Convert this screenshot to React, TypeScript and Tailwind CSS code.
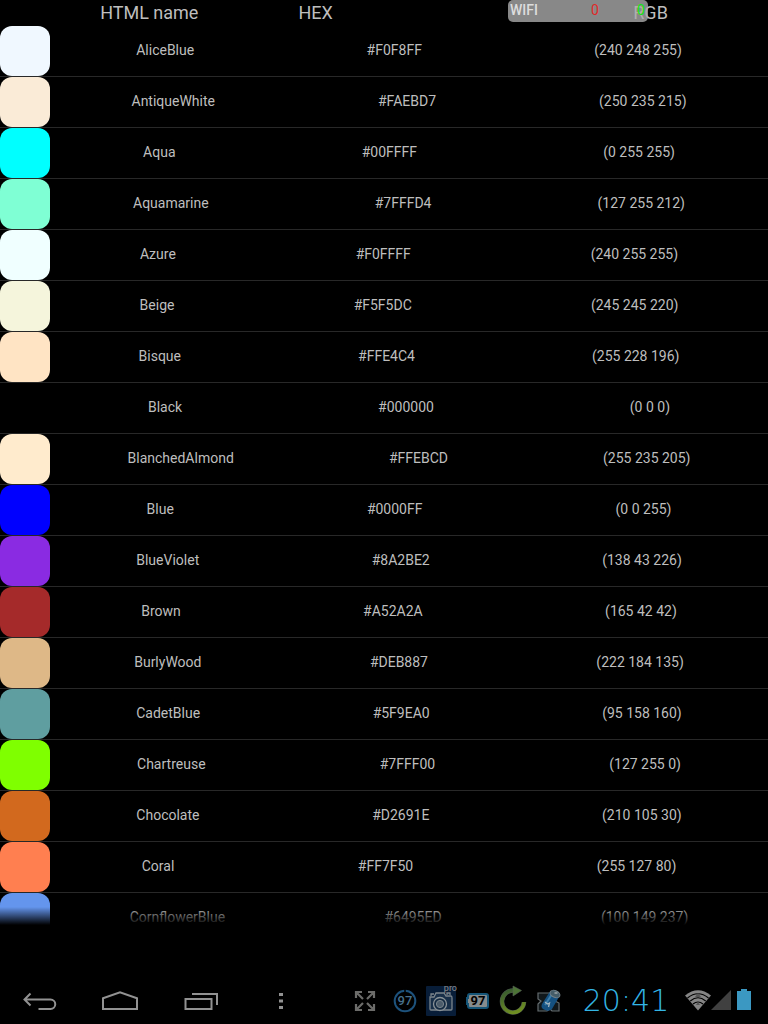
import type { ReactNode } from "react";

type ColorRow = { name: string; hex: string; rgb: string };

const COLORS: ColorRow[] = [
  { name: "AliceBlue", hex: "#F0F8FF", rgb: "(240 248 255)" },
  { name: "AntiqueWhite", hex: "#FAEBD7", rgb: "(250 235 215)" },
  { name: "Aqua", hex: "#00FFFF", rgb: "(0 255 255)" },
  { name: "Aquamarine", hex: "#7FFFD4", rgb: "(127 255 212)" },
  { name: "Azure", hex: "#F0FFFF", rgb: "(240 255 255)" },
  { name: "Beige", hex: "#F5F5DC", rgb: "(245 245 220)" },
  { name: "Bisque", hex: "#FFE4C4", rgb: "(255 228 196)" },
  { name: "Black", hex: "#000000", rgb: "(0 0 0)" },
  { name: "BlanchedAlmond", hex: "#FFEBCD", rgb: "(255 235 205)" },
  { name: "Blue", hex: "#0000FF", rgb: "(0 0 255)" },
  { name: "BlueViolet", hex: "#8A2BE2", rgb: "(138 43 226)" },
  { name: "Brown", hex: "#A52A2A", rgb: "(165 42 42)" },
  { name: "BurlyWood", hex: "#DEB887", rgb: "(222 184 135)" },
  { name: "CadetBlue", hex: "#5F9EA0", rgb: "(95 158 160)" },
  { name: "Chartreuse", hex: "#7FFF00", rgb: "(127 255 0)" },
  { name: "Chocolate", hex: "#D2691E", rgb: "(210 105 30)" },
  { name: "Coral", hex: "#FF7F50", rgb: "(255 127 80)" },
  { name: "CornflowerBlue", hex: "#6495ED", rgb: "(100 149 237)" },
];

function TrafficOverlay() {
  return (
    <div className="absolute top-0 right-[120px] z-10 flex h-[22px] w-[140px] rounded-[5px] bg-[#aaaaaa]/80 px-0.5 text-sm leading-5">
      <span className="flex-1 font-medium text-[#dddddd]">WIFI</span>
      <span className="w-[46px] text-[#e02828]">0</span>
      <span className="w-[9px] text-[#10e810]">0</span>
    </div>
  );
}

function ColorTable() {
  return (
    <table className="flex min-h-0 flex-1 flex-col">
      <thead className="block">
        <tr className="flex h-[26px] text-lg leading-[26px]">
          <th className="flex-auto p-0 text-center font-normal">HTML name</th>
          <th className="flex-auto p-0 text-left font-normal">HEX</th>
          <th className="flex-auto p-0 text-center font-normal">RGB</th>
        </tr>
      </thead>
      <tbody className="block min-h-0 flex-1 overflow-y-auto [scrollbar-width:none]">
        {COLORS.map((c) => (
          <tr key={c.name} className="flex h-[51px] border-b border-[#282828] text-sm leading-[48px]">
            <td className="w-[50px] flex-none p-0">
              <div className="h-[50px] rounded-xl" style={{ backgroundColor: c.hex }} />
            </td>
            <td className="flex-auto p-0 text-center">{c.name}</td>
            <td className="flex-auto p-0 text-center">{c.hex}</td>
            <td className="flex-auto p-0 text-center">{c.rgb}</td>
          </tr>
        ))}
      </tbody>
    </table>
  );
}

function NavButton({ label, children }: { label: string; children: ReactNode }) {
  return (
    <button type="button" aria-label={label} className="h-12 w-20 shrink-0">
      <svg viewBox="0 0 80 48" className="h-12 w-20" fill="none" stroke="#929292" strokeWidth="2">
        {children}
      </svg>
    </button>
  );
}

function StatusIcon({ children }: { children: ReactNode }) {
  return (
    <svg viewBox="0 0 36 48" className="h-12 w-9 shrink-0" fill="none" aria-hidden="true">
      {children}
    </svg>
  );
}

function SystemBar() {
  return (
    <footer className="flex h-12 shrink-0 items-center">
      <NavButton label="Back">
        <path d="M30.5 17.5L24.5 23.5L30.5 29.5M24.500 23.500H50.500A4.700 4.700 0 0 1 50.500 33H38.500" />
      </NavButton>
      <NavButton label="Home">
        <path d="M23 33V22.200L40 16.200L57 22.200V33Z" />
      </NavButton>
      <NavButton label="Recent apps">
        <path d="M25.500 23H51.500V33H25.500ZM32 18H57V29" />
      </NavButton>
      <NavButton label="More">
        <path d="M39 18.500H43M39 25H43M39 31.500H43" strokeWidth="3" />
      </NavButton>

      <div className="ml-auto flex items-center pr-4">
        <button type="button" aria-label="Full screen" className="mr-1 h-12 w-9">
          <StatusIcon>
            <path
              d="M9 22V16H15M9 16L16 23M21 16H27V22M27 16L20 23M9 28V34H15M9 34L16 27M27 28V34H21M27 34L20 27"
              stroke="#6c6c6a"
              strokeWidth="2.200"
            />
          </StatusIcon>
        </button>

        <div className="relative flex h-12 w-9 items-center justify-center">
          <svg viewBox="0 0 36 48" className="absolute inset-0 h-12 w-9" fill="none" aria-hidden="true">
            <circle cx="18" cy="25" r="10.300" stroke="#1d527c" strokeWidth="2" />
            <path d="M18 13V16.500" stroke="#000" strokeWidth="1.500" />
          </svg>
          <span className="relative pt-0.5 text-[13px] leading-4 font-medium text-[#47708c]">97</span>
        </div>

        <div className="relative h-12 w-9">
          <svg viewBox="0 0 36 48" className="h-12 w-9" fill="none" aria-hidden="true">
            <rect x="3" y="10" width="30" height="30" rx="1" fill="#081d38" />
            <path
              d="M7 21H11L13 17H21L23 20H28Q29 20 29 22V33Q29 34 28 34H8Q7 34 7 33ZM8 20V18H11M24 19V17H27V19"
              fill="#182f49"
              stroke="#7c858c"
              strokeWidth="1.300"
            />
            <circle cx="17" cy="28" r="6.500" fill="#142a42" stroke="#8a9297" strokeWidth="1.300" />
            <circle cx="17" cy="28" r="3.600" fill="#4c5c6b" stroke="#7a858d" />
          </svg>
          <span className="absolute top-2 right-0.5 text-[9px] leading-[9px] text-[#8c8c8c]">pro</span>
        </div>

        <div className="relative flex h-12 w-9 items-center justify-center">
          <svg viewBox="0 0 36 48" className="absolute inset-0 h-12 w-9" fill="none" aria-hidden="true">
            <path
              d="M11 18H27Q29 18 29 20V30Q29 32 27 32H11Q9 32 9 30V28H8V22H9V20Q9 18 11 18Z"
              fill="#858b8d"
              stroke="#155578"
              strokeWidth="2"
            />
          </svg>
          <span className="relative pt-0.5 pl-0.5 text-[13px] leading-4 font-bold text-black">97</span>
        </div>

        <StatusIcon>
          <path d="M19 14.500A11 11 0 1 0 29 26" stroke="#48544a" strokeWidth="4.500" />
          <path d="M19 14.500A11 11 0 1 0 29 26" stroke="url(#ring)" strokeWidth="3.500" />
          <path d="M18 10L26.500 14.500L18 20Z" fill="#4c7435" stroke="#566056" strokeWidth=".6" />
          <defs>
            <linearGradient id="ring" x1="12" y1="14" x2="20" y2="38" gradientUnits="userSpaceOnUse">
              <stop stopColor="#385b2f" />
              <stop offset="1" stopColor="#729121" />
            </linearGradient>
          </defs>
        </StatusIcon>

        <StatusIcon>
          <path
            d="M7 17H26V22L24 25L28 27V35H21L19 33L16 35H7V28L10 25L7 23Z"
            fill="#11181b"
            stroke="#656c6f"
            strokeWidth="1.200"
          />
          <path d="M11 28L18 17Q21 13 26 15Q30 17 28 21L21 33Q18 36 14 34Q9 32 11 28Z" fill="#155181" />
          <path d="M14 29L21 18" stroke="#3b7eaa" strokeWidth="2" />
          <ellipse cx="24" cy="18" rx="5.200" ry="3.300" transform="rotate(24 24 18)" fill="#455d69" stroke="#738087" />
          <ellipse cx="25" cy="17" rx="1.800" ry="1" fill="#8d979b" />
          <path d="M14 26L16.500 28L18.500 27L17.500 31" stroke="#a0b4bf" strokeWidth="1.300" />
        </StatusIcon>

        <time className="w-[118px] pt-0.5 text-center font-['DejaVu_Sans_Light','DejaVu_Sans','Inter',sans-serif] text-3xl leading-[46px] font-extralight text-[#33b5e5]">
          20:41
        </time>

        <svg viewBox="0 0 67 48" className="h-12 w-[67px] shrink-0" fill="none" role="img" aria-label="Wi-Fi, signal and battery">
          <path d="M0 19.500Q13 9 26 19.500L13 34.500Z" fill="#858585" />
          <path d="M2.500 22Q13 13.500 23.500 22M5.300 25Q13 18.500 20.700 25M8 28Q13 24 18 28" stroke="#000" strokeWidth="1.200" />
          <path d="M10 21L13 17L16 21M11 29L13 26L15 29" fill="#555" />
          <path d="M26 34L46 14V34Z" fill="#404040" />
          <path d="M52 15H56V13H62V15H66V34H52Z" fill="#3b98c2" />
        </svg>
      </div>
    </footer>
  );
}

export default function App() {
  return (
    <div className="relative flex h-screen flex-col overflow-hidden bg-black font-['Roboto',sans-serif] text-[#bebebe]">
      <TrafficOverlay />
      <main className="relative flex min-h-0 flex-1 flex-col">
        <ColorTable />
        <div className="pointer-events-none absolute inset-x-0 bottom-0 h-[18px] bg-linear-to-b from-transparent to-black" />
      </main>
      <div className="h-[51px] shrink-0" />
      <SystemBar />
    </div>
  );
}
